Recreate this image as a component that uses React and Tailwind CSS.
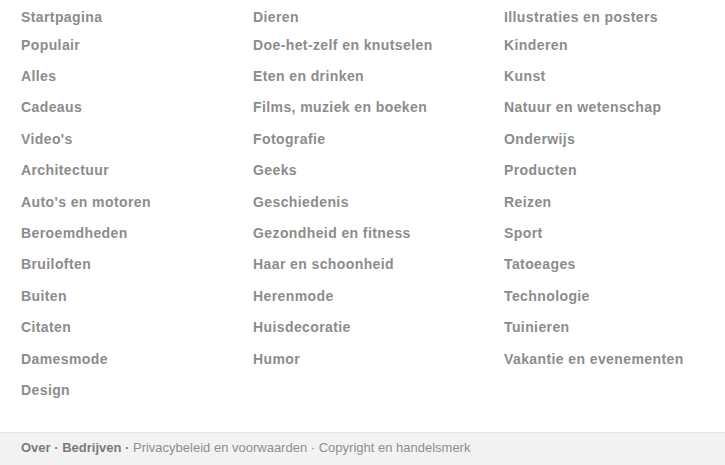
import React from "react";

const columns = [
  {
    width: "w-[232px]",
    items: [
      "Startpagina",
      "Populair",
      "Alles",
      "Cadeaus",
      "Video's",
      "Architectuur",
      "Auto's en motoren",
      "Beroemdheden",
      "Bruiloften",
      "Buiten",
      "Citaten",
      "Damesmode",
      "Design",
    ],
  },
  {
    width: "w-[251px]",
    items: [
      "Dieren",
      "Doe-het-zelf en knutselen",
      "Eten en drinken",
      "Films, muziek en boeken",
      "Fotografie",
      "Geeks",
      "Geschiedenis",
      "Gezondheid en fitness",
      "Haar en schoonheid",
      "Herenmode",
      "Huisdecoratie",
      "Humor",
    ],
  },
  {
    width: "flex-1",
    items: [
      "Illustraties en posters",
      "Kinderen",
      "Kunst",
      "Natuur en wetenschap",
      "Onderwijs",
      "Producten",
      "Reizen",
      "Sport",
      "Tatoeages",
      "Technologie",
      "Tuinieren",
      "Vakantie en evenementen",
    ],
  },
];

export default function App() {
  return (
    <div className="w-[725px] h-[465px] bg-white flex flex-col font-['Liberation_Sans',Arial,sans-serif] overflow-hidden">
      <div className="flex-1 flex pl-[21px] pt-[1.5px]">
        {columns.map((col, i) => (
          <ul key={i} className={`${col.width} flex flex-col`}>
            {col.items.map((item, j) => (
              <li
                key={item}
                className={`${j === 0 ? "h-[28px]" : "h-[31.42px]"} leading-[31.42px] text-[14px] font-bold tracking-[0.4px] text-[#8c8c8c] whitespace-nowrap`}
              >
                <a href="#">{item}</a>
              </li>
            ))}
          </ul>
        ))}
      </div>
      <div className="h-[33px] border-t border-[#e6e6e6] bg-[#f2f2f2] pl-[21px] text-[13px] leading-[30px] text-[#8f8f8f] whitespace-nowrap">
        <span className="font-bold text-[#7a7a7a]">Over · Bedrijven · </span>
        <span>Privacybeleid en voorwaarden</span>
        <span> · </span>
        <span>Copyright en handelsmerk</span>
      </div>
    </div>
  );
}
